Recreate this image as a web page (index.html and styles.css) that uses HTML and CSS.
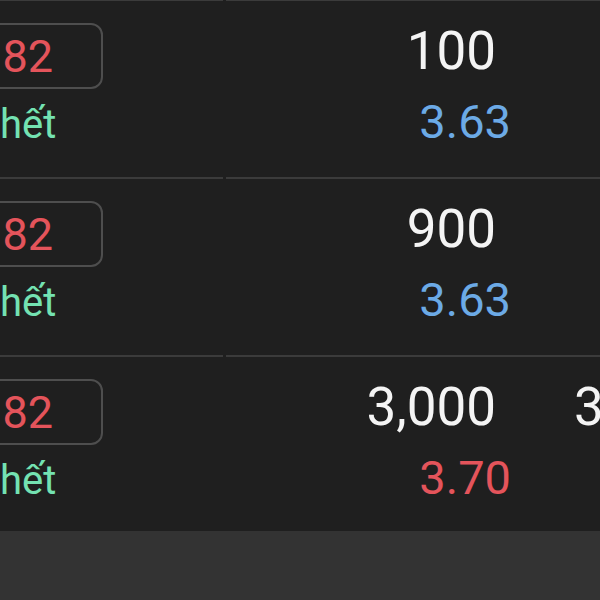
FILE: index.html
```html
<!DOCTYPE html>
<html lang="vi">
<head>
<meta charset="utf-8">
<link rel="stylesheet" href="styles.css">
</head>
<body>
<div class="list">
  <div class="row">
    <div class="cell left">
      <div class="price-box"><span class="red">82</span></div>
      <div class="status">hết</div>
    </div>
    <div class="cell right">
      <div class="qty-line"><span class="qty">100</span></div>
      <div class="price-line"><span class="blue">3.63</span></div>
    </div>
  </div>
  <div class="row">
    <div class="cell left">
      <div class="price-box"><span class="red">82</span></div>
      <div class="status">hết</div>
    </div>
    <div class="cell right">
      <div class="qty-line"><span class="qty">900</span></div>
      <div class="price-line"><span class="blue">3.63</span></div>
    </div>
  </div>
  <div class="row">
    <div class="cell left">
      <div class="price-box"><span class="red">82</span></div>
      <div class="status">hết</div>
    </div>
    <div class="cell right">
      <div class="qty-line"><span class="qty">3,000</span><span class="next">3,000</span></div>
      <div class="price-line"><span class="red-price">3.70</span></div>
    </div>
  </div>
</div>
<div class="footer"></div>
</body>
</html>
```
FILE: styles.css
```css
html, body {
  margin: 0;
  padding: 0;
  width: 600px;
  height: 600px;
  overflow: hidden;
  background: #1f1f1f;
  font-family: Roboto, "Noto Sans", sans-serif;
}
.list {
  margin-top: -1px;
}
.row {
  display: grid;
  grid-template-columns: 223px 1fr;
  column-gap: 3px;
  height: 178px;
}
.row:last-child {
  height: 176px;
}
.cell {
  border-top: 2px solid #3b3b3b;
  overflow: hidden;
  min-width: 0;
}
.left {
  padding-top: 22px;
}
.price-box {
  box-sizing: border-box;
  margin-left: -60px;
  width: 163px;
  height: 66px;
  border: 2px solid #4e4e4e;
  border-radius: 12px;
  display: flex;
  align-items: center;
  justify-content: flex-end;
  padding-right: 48px;
  font-size: 45px;
  line-height: 45px;
}
.red {
  color: #e4545b;
}
.status {
  margin-top: 16px;
  font-size: 40px;
  line-height: 40px;
  color: #74e2b2;
  white-space: nowrap;
}
.right {
  padding-top: 24px;
}
.qty-line {
  display: flex;
  font-size: 53px;
  line-height: 53px;
  color: #f4f4f4;
  white-space: nowrap;
}
.qty {
  flex: 0 0 270px;
  text-align: right;
}
.next {
  flex: 0 0 auto;
  margin-left: 78px;
}
.price-line {
  margin-top: 21px;
  width: 285px;
  text-align: right;
  font-size: 47px;
  line-height: 46px;
}
.blue {
  color: #6caae6;
}
.red-price {
  color: #e4545b;
}
.footer {
  height: 69px;
  background: #333333;
}
```
